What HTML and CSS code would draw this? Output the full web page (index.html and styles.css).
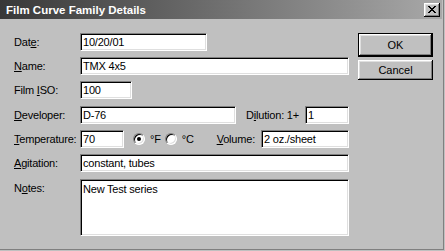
FILE: index.html
```html
<!DOCTYPE html>
<html>
<head>
<meta charset="utf-8">
<link rel="stylesheet" href="styles.css">
</head>
<body>
<div class="window">
  <div class="titlebar">
    <span class="title">Film Curve Family Details</span>
    <button class="close" aria-label="Close">
      <svg width="8" height="7" viewBox="0 0 8 7"><path d="M0 0h2v1h1v1h2V1h1V0h2v1H7v1H6v1H5v1h1v1h1v1h1v1H6V6H5V5H3v1H2v1H0V6h1V5h1V4h1V3H2V2H1V1H0z" fill="#000"/></svg>
    </button>
  </div>
  <div class="body">
    <div class="form">
      <label class="lbl">Dat<u>e</u>:</label>
      <div class="row"><div class="field w-date">10/20/01</div></div>

      <label class="lbl"><u>N</u>ame:</label>
      <div class="row"><div class="field w-full">TMX 4x5</div></div>

      <label class="lbl">Film <u>I</u>SO:</label>
      <div class="row"><div class="field w-iso">100</div></div>

      <label class="lbl"><u>D</u>eveloper:</label>
      <div class="row">
        <div class="field w-dev">D-76</div>
        <span class="lbl sub dil">D<u>i</u>lution: 1+</span>
        <div class="field w-dil">1</div>
      </div>

      <label class="lbl"><u>T</u>emperature:</label>
      <div class="row">
        <div class="field w-temp">70</div>
        <span class="radio on"></span><span class="rtext">°F</span>
        <span class="radio"></span><span class="rtext">°C</span>
        <span class="lbl sub vol"><u>V</u>olume:</span>
        <div class="field w-vol">2 oz./sheet</div>
      </div>

      <label class="lbl"><u>A</u>gitation:</label>
      <div class="row"><div class="field w-full">constant, tubes</div></div>

      <label class="lbl top">N<u>o</u>tes:</label>
      <div class="row"><div class="field w-full notes">New Test series</div></div>
    </div>
    <div class="buttons">
      <button class="btn default">OK</button>
      <button class="btn cancel">Cancel</button>
    </div>
  </div>
</div>
</body>
</html>
```
FILE: styles.css
```css
* { box-sizing: border-box; }
html, body { margin: 0; padding: 0; }
body {
  width: 445px;
  height: 251px;
  background: #c0c0c0;
  font-family: "Liberation Sans", Arial, sans-serif;
  font-size: 11px;
  letter-spacing: -0.2px;
  color: #000;
  overflow: hidden;
}
.window {
  width: 445px;
  height: 251px;
  background: #c0c0c0;
  box-shadow: inset -1px -1px #c0c0c0, inset -2px -2px #808080;
  padding-right: 3px;
}
.titlebar {
  height: 19px;
  background: linear-gradient(to right, #383838, #a8a8a8);
  display: flex;
  align-items: center;
  justify-content: space-between;
  padding: 0 2px 0 6px;
}
.title {
  color: #fff;
  font-weight: bold;
  font-size: 11.5px;
  letter-spacing: 0;
}
.close {
  width: 16px;
  height: 14px;
  padding: 0;
  margin: 0;
  border: 0;
  background: #c0c0c0;
  box-shadow: inset -1px -1px #000, inset 1px 1px #fff, inset -2px -2px #808080, inset 2px 2px #dfdfdf;
  display: flex;
  align-items: center;
  justify-content: center;
}
.close svg { display: block; }
.body {
  display: flex;
  padding: 14px 0 0 14px;
}
.form {
  display: grid;
  grid-template-columns: 66px 269px;
  grid-template-rows: 24px 24px 25px 24px 24px 25px 57px;
  align-items: start;
}
.lbl {
  display: block;
  height: 18px;
  line-height: 18px;
  white-space: nowrap;
}
.row {
  display: flex;
  align-items: center;
  height: 18px;
}
.field {
  height: 18px;
  background: #fff;
  border: 1px solid;
  border-color: #808080 #fff #fff #808080;
  box-shadow: inset 1px 1px #000, inset -1px -1px #dfdfdf;
  padding: 0 2px;
  line-height: 16px;
  white-space: nowrap;
  overflow: hidden;
}
.w-date { width: 127px; }
.w-full { width: 269px; }
.w-iso { width: 52px; }
.w-dev { width: 156px; }
.w-dil { width: 44px; }
.w-temp { width: 44px; }
.w-vol { width: 88px; }
.dil { margin-left: auto; margin-right: 6px; }
.vol { margin-left: auto; margin-right: 6px; }
.notes { height: 57px; padding-top: 1px; }
.form .row:last-child { height: 57px; }
.radio {
  width: 12px;
  height: 12px;
  border-radius: 50%;
  background: #fff;
  border: 1px solid;
  border-color: #808080 #fff #fff #808080;
  box-shadow: inset 1px 1px #000, inset -1px -1px #dfdfdf;
  margin-left: 9px;
  position: relative;
  flex: none;
}
.radio + .rtext { margin-left: 5px; }
.rtext + .radio { margin-left: 4px; }
.radio.on::after {
  content: "";
  position: absolute;
  left: 3px;
  top: 3px;
  width: 4px;
  height: 4px;
  border-radius: 50%;
  background: #000;
}
.buttons {
  margin-left: 9px;
  display: flex;
  flex-direction: column;
  gap: 3px;
}
.btn {
  width: 75px;
  height: 24px;
  padding: 0;
  margin: 0;
  border: 0;
  background: #c0c0c0;
  font-family: "Liberation Sans", Arial, sans-serif;
  font-size: 11px;
  color: #000;
  box-shadow: inset -1px -1px #000, inset 1px 1px #fff, inset -2px -2px #808080, inset 2px 2px #dfdfdf;
}
.btn.default {
  border: 1px solid #000;
}
.btn.cancel {
  height: 20px;
}
```
